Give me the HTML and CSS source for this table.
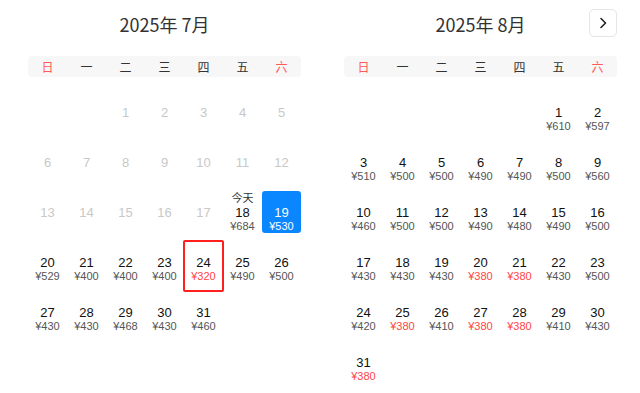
FILE: index.html
```html
<!DOCTYPE html>
<html lang="zh-CN">
<head>
<meta charset="utf-8">
<title>日历</title>
<link rel="stylesheet" href="styles.css">
</head>
<body>
<div class="calendar">
  <section class="month">
    <header class="month-head">
      <h2 class="title">2025年 7月</h2>
    </header>
    <div class="weekdays">
      <span class="wk weekend">日</span><span class="wk">一</span><span class="wk">二</span><span class="wk">三</span><span class="wk">四</span><span class="wk">五</span><span class="wk weekend">六</span>
    </div>
    <div class="days">
      <div class="day disabled start-3"><span class="num">1</span></div>
      <div class="day disabled"><span class="num">2</span></div>
      <div class="day disabled"><span class="num">3</span></div>
      <div class="day disabled"><span class="num">4</span></div>
      <div class="day disabled"><span class="num">5</span></div>
      <div class="day disabled"><span class="num">6</span></div>
      <div class="day disabled"><span class="num">7</span></div>
      <div class="day disabled"><span class="num">8</span></div>
      <div class="day disabled"><span class="num">9</span></div>
      <div class="day disabled"><span class="num">10</span></div>
      <div class="day disabled"><span class="num">11</span></div>
      <div class="day disabled"><span class="num">12</span></div>
      <div class="day disabled"><span class="num">13</span></div>
      <div class="day disabled"><span class="num">14</span></div>
      <div class="day disabled"><span class="num">15</span></div>
      <div class="day disabled"><span class="num">16</span></div>
      <div class="day disabled"><span class="num">17</span></div>
      <div class="day today"><span class="lbl">今天</span><span class="num">18</span><span class="price">¥684</span></div>
      <div class="day selected"><span class="num">19</span><span class="price">¥530</span></div>
      <div class="day"><span class="num">20</span><span class="price">¥529</span></div>
      <div class="day"><span class="num">21</span><span class="price">¥400</span></div>
      <div class="day"><span class="num">22</span><span class="price">¥400</span></div>
      <div class="day"><span class="num">23</span><span class="price">¥400</span></div>
      <div class="day framed"><span class="num">24</span><span class="price low">¥320</span></div>
      <div class="day"><span class="num">25</span><span class="price">¥490</span></div>
      <div class="day"><span class="num">26</span><span class="price">¥500</span></div>
      <div class="day"><span class="num">27</span><span class="price">¥430</span></div>
      <div class="day"><span class="num">28</span><span class="price">¥430</span></div>
      <div class="day"><span class="num">29</span><span class="price">¥468</span></div>
      <div class="day"><span class="num">30</span><span class="price">¥430</span></div>
      <div class="day"><span class="num">31</span><span class="price">¥460</span></div>
    </div>
  </section>

  <section class="month">
    <header class="month-head">
      <h2 class="title">2025年 8月</h2>
      <button class="next" type="button" aria-label="下个月">
        <svg width="10" height="12" viewBox="0 0 10 12"><path d="M3 1.5 L7.5 6 L3 10.5" fill="none" stroke="#222" stroke-width="1.6" stroke-linecap="round" stroke-linejoin="round"/></svg>
      </button>
    </header>
    <div class="weekdays">
      <span class="wk weekend">日</span><span class="wk">一</span><span class="wk">二</span><span class="wk">三</span><span class="wk">四</span><span class="wk">五</span><span class="wk weekend">六</span>
    </div>
    <div class="days">
      <div class="day start-6"><span class="num">1</span><span class="price">¥610</span></div>
      <div class="day"><span class="num">2</span><span class="price">¥597</span></div>
      <div class="day"><span class="num">3</span><span class="price">¥510</span></div>
      <div class="day"><span class="num">4</span><span class="price">¥500</span></div>
      <div class="day"><span class="num">5</span><span class="price">¥500</span></div>
      <div class="day"><span class="num">6</span><span class="price">¥490</span></div>
      <div class="day"><span class="num">7</span><span class="price">¥490</span></div>
      <div class="day"><span class="num">8</span><span class="price">¥500</span></div>
      <div class="day"><span class="num">9</span><span class="price">¥560</span></div>
      <div class="day"><span class="num">10</span><span class="price">¥460</span></div>
      <div class="day"><span class="num">11</span><span class="price">¥500</span></div>
      <div class="day"><span class="num">12</span><span class="price">¥500</span></div>
      <div class="day"><span class="num">13</span><span class="price">¥490</span></div>
      <div class="day"><span class="num">14</span><span class="price">¥480</span></div>
      <div class="day"><span class="num">15</span><span class="price">¥490</span></div>
      <div class="day"><span class="num">16</span><span class="price">¥500</span></div>
      <div class="day"><span class="num">17</span><span class="price">¥430</span></div>
      <div class="day"><span class="num">18</span><span class="price">¥430</span></div>
      <div class="day"><span class="num">19</span><span class="price">¥430</span></div>
      <div class="day"><span class="num">20</span><span class="price low">¥380</span></div>
      <div class="day"><span class="num">21</span><span class="price low">¥380</span></div>
      <div class="day"><span class="num">22</span><span class="price">¥430</span></div>
      <div class="day"><span class="num">23</span><span class="price">¥500</span></div>
      <div class="day"><span class="num">24</span><span class="price">¥420</span></div>
      <div class="day"><span class="num">25</span><span class="price low">¥380</span></div>
      <div class="day"><span class="num">26</span><span class="price">¥410</span></div>
      <div class="day"><span class="num">27</span><span class="price low">¥380</span></div>
      <div class="day"><span class="num">28</span><span class="price low">¥380</span></div>
      <div class="day"><span class="num">29</span><span class="price">¥410</span></div>
      <div class="day"><span class="num">30</span><span class="price">¥430</span></div>
      <div class="day"><span class="num">31</span><span class="price low">¥380</span></div>
    </div>
  </section>
</div>
</body>
</html>
```

FILE: styles.css
```css
html, body {
  margin: 0;
  padding: 0;
  background: #fff;
}
body {
  font-family: "Liberation Sans", "Noto Sans CJK SC", sans-serif;
  color: #111;
}
.calendar {
  display: flex;
  gap: 43px;
  padding-left: 28px;
}
.month {
  width: 273px;
}
.month-head {
  position: relative;
  height: 48px;
  display: flex;
  align-items: center;
  justify-content: center;
}
.title {
  margin: 0;
  font-family: "Noto Sans CJK SC", sans-serif;
  font-weight: 400;
  font-size: 18px;
  line-height: 24px;
  color: #333;
}
.next {
  position: absolute;
  right: 0;
  top: 9px;
  width: 28px;
  height: 28px;
  padding: 0;
  border: 1px solid #e6e6e6;
  border-radius: 5px;
  background: #fff;
  display: flex;
  align-items: center;
  justify-content: center;
}
.weekdays {
  margin-top: 8px;
  height: 21px;
  display: grid;
  grid-template-columns: repeat(7, 39px);
  align-items: center;
  background: #f7f7f7;
  border-radius: 4px;
}
.wk {
  text-align: center;
  font-family: "Noto Sans CJK SC", sans-serif;
  font-size: 12px;
  line-height: 21px;
  color: #333;
}
.wk.weekend {
  color: #ff5a5a;
}
.days {
  margin-top: 14px;
  display: grid;
  grid-template-columns: repeat(7, 39px);
  grid-auto-rows: 42px;
  row-gap: 8px;
}
.start-3 { grid-column-start: 3; }
.start-6 { grid-column-start: 6; }
.day {
  position: relative;
  display: flex;
  flex-direction: column;
  align-items: center;
  padding-top: 14px;
  box-sizing: border-box;
}
.lbl {
  margin-top: -15px;
  height: 15px;
  font-family: "Noto Sans CJK SC", sans-serif;
  font-size: 11px;
  line-height: 15px;
  color: #333;
}
.num {
  font-size: 13px;
  line-height: 15px;
  color: #111;
}
.price {
  font-size: 11px;
  line-height: 13px;
  color: #555;
}
.price.low {
  color: #ff4545;
}
.day.disabled .num {
  color: #c8c8c8;
}
.day.selected {
  background: #0a86ff;
  border-radius: 3px;
}
.day.selected .num,
.day.selected .price {
  color: #fff;
}
.day.framed::after {
  content: "";
  position: absolute;
  left: -1px;
  right: -1px;
  top: -1px;
  bottom: -9px;
  border: 2px solid #ff1f1f;
  border-radius: 2px;
}
```
